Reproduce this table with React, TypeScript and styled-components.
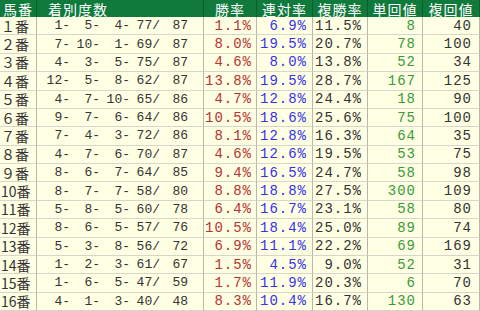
import styled, { createGlobalStyle } from 'styled-components';

const GlobalStyle = createGlobalStyle`
  html, body {
    margin: 0;
    padding: 0;
    background: #ffffff;
  }
`;

const Table = styled.div`
  display: grid;
  grid-template-columns: 37px 167px 53px 56px 55px 55px 57px;
  grid-template-rows: 17px repeat(16, 1fr);
  width: 480px;
  height: 311px;
  background: #ffffe4;
  font-family: "Liberation Mono", "DejaVu Sans Mono", monospace;
  line-height: 1;
`;

const HeaderCell = styled.div<{ $left?: boolean }>`
  background: #0f7a3c;
  color: #ffffff;
  font-family: "Noto Sans CJK JP", sans-serif;
  font-size: 14px;
  letter-spacing: 1px;
  line-height: 1;
  display: flex;
  align-items: center;
  justify-content: ${p => (p.$left ? 'flex-start' : 'center')};
  padding-left: ${p => (p.$left ? '11px' : '0')};
  border-right: 1px solid #0a5c2c;
  box-sizing: border-box;
  white-space: nowrap;
  overflow: hidden;
  &:last-child {
    border-right: none;
  }
`;

const Cell = styled.div<{ $color?: string; $pad?: number }>`
  display: flex;
  align-items: center;
  justify-content: flex-end;
  padding-right: ${p => p.$pad ?? 5}px;
  color: ${p => p.$color ?? '#333333'};
  font-size: 14px;
  letter-spacing: 1px;
  border-right: 1px solid #b8b8b0;
  border-bottom: 1px solid #d6d6cc;
  box-sizing: border-box;
  white-space: pre;
  min-width: 0;
`;

const HorseCell = styled(Cell)`
  justify-content: flex-start;
  padding-left: 1px;
  padding-right: 0;
  font-family: "Noto Sans CJK JP", sans-serif;
  font-size: 14px;
  letter-spacing: 0;
  color: #333333;
`;

const RecordCell = styled(Cell)`
  justify-content: flex-start;
  padding-right: 0;
  font-size: 13px;
  letter-spacing: 0;
`;

const Field = styled.span<{ $w: number }>`
  display: inline-block;
  width: ${p => p.$w}px;
  text-align: right;
`;

type Row = {
  no: string;
  rec: [number, number, number, number, number];
  win: string;
  ren: string;
  fuku: string;
  tan: number;
  fkv: number;
};

const rows: Row[] = [
  { no: '１番', rec: [1, 5, 4, 77, 87], win: '1.1%', ren: '6.9%', fuku: '11.5%', tan: 8, fkv: 40 },
  { no: '２番', rec: [7, 10, 1, 69, 87], win: '8.0%', ren: '19.5%', fuku: '20.7%', tan: 78, fkv: 100 },
  { no: '３番', rec: [4, 3, 5, 75, 87], win: '4.6%', ren: '8.0%', fuku: '13.8%', tan: 52, fkv: 34 },
  { no: '４番', rec: [12, 5, 8, 62, 87], win: '13.8%', ren: '19.5%', fuku: '28.7%', tan: 167, fkv: 125 },
  { no: '５番', rec: [4, 7, 10, 65, 86], win: '4.7%', ren: '12.8%', fuku: '24.4%', tan: 18, fkv: 90 },
  { no: '６番', rec: [9, 7, 6, 64, 86], win: '10.5%', ren: '18.6%', fuku: '25.6%', tan: 75, fkv: 100 },
  { no: '７番', rec: [7, 4, 3, 72, 86], win: '8.1%', ren: '12.8%', fuku: '16.3%', tan: 64, fkv: 35 },
  { no: '８番', rec: [4, 7, 6, 70, 87], win: '4.6%', ren: '12.6%', fuku: '19.5%', tan: 53, fkv: 75 },
  { no: '９番', rec: [8, 6, 7, 64, 85], win: '9.4%', ren: '16.5%', fuku: '24.7%', tan: 58, fkv: 98 },
  { no: '10番', rec: [8, 7, 7, 58, 80], win: '8.8%', ren: '18.8%', fuku: '27.5%', tan: 300, fkv: 109 },
  { no: '11番', rec: [5, 8, 5, 60, 78], win: '6.4%', ren: '16.7%', fuku: '23.1%', tan: 58, fkv: 80 },
  { no: '12番', rec: [8, 6, 5, 57, 76], win: '10.5%', ren: '18.4%', fuku: '25.0%', tan: 89, fkv: 74 },
  { no: '13番', rec: [5, 3, 8, 56, 72], win: '6.9%', ren: '11.1%', fuku: '22.2%', tan: 69, fkv: 169 },
  { no: '14番', rec: [1, 2, 3, 61, 67], win: '1.5%', ren: '4.5%', fuku: '9.0%', tan: 52, fkv: 31 },
  { no: '15番', rec: [1, 6, 5, 47, 59], win: '1.7%', ren: '11.9%', fuku: '20.3%', tan: 6, fkv: 70 },
  { no: '16番', rec: [4, 1, 3, 40, 48], win: '8.3%', ren: '10.4%', fuku: '16.7%', tan: 130, fkv: 63 },
];

const RED = '#b83232';
const BLUE = '#3333ee';
const GREEN = '#3a9a3a';

export default function App() {
  return (
    <>
      <GlobalStyle />
      <Table>
        <HeaderCell>馬番</HeaderCell>
        <HeaderCell $left>着別度数</HeaderCell>
        <HeaderCell>勝率</HeaderCell>
        <HeaderCell>連対率</HeaderCell>
        <HeaderCell>複勝率</HeaderCell>
        <HeaderCell>単回値</HeaderCell>
        <HeaderCell>複回値</HeaderCell>
        {rows.map(r => (
          <Row key={r.no} row={r} />
        ))}
      </Table>
    </>
  );
}

function Row({ row }: { row: Row }) {
  const [a, b, c, d, e] = row.rec;
  return (
    <>
      <HorseCell>{row.no}</HorseCell>
      <RecordCell>
        <Field $w={33}>{a}-</Field>
        <Field $w={30}>{b}-</Field>
        <Field $w={30}>{c}-</Field>
        <Field $w={30}>{d}/</Field>
        <Field $w={28}>{e}</Field>
      </RecordCell>
      <Cell $color={RED} $pad={4}>{row.win}</Cell>
      <Cell $color={BLUE}>{row.ren}</Cell>
      <Cell>{row.fuku}</Cell>
      <Cell $color={GREEN} $pad={6}>{row.tan}</Cell>
      <Cell $pad={7}>{row.fkv}</Cell>
    </>
  );
}
